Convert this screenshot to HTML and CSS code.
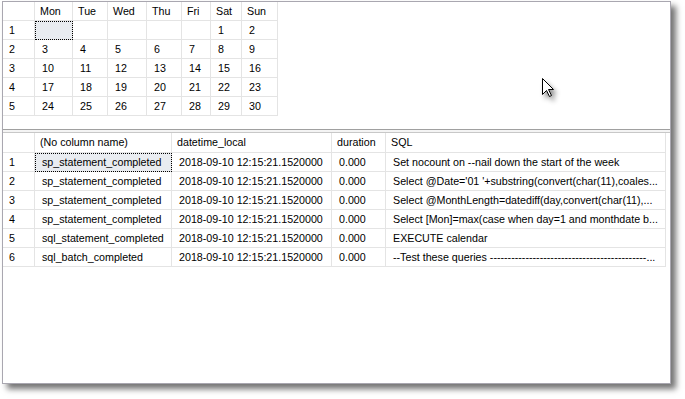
FILE: index.html
```
<!DOCTYPE html>
<html>
<head>
<meta charset="utf-8">
<link rel="stylesheet" href="styles.css">
</head>
<body>
<div class="window">
  <div class="pane pane-top">
    <div class="grid cal">
      <div class="row head"><div class="c rn"></div><div class="c">Mon</div><div class="c">Tue</div><div class="c">Wed</div><div class="c">Thu</div><div class="c">Fri</div><div class="c">Sat</div><div class="c">Sun</div></div>
      <div class="row"><div class="c rn">1</div><div class="c focus"></div><div class="c"></div><div class="c"></div><div class="c"></div><div class="c"></div><div class="c">1</div><div class="c">2</div></div>
      <div class="row"><div class="c rn">2</div><div class="c">3</div><div class="c">4</div><div class="c">5</div><div class="c">6</div><div class="c">7</div><div class="c">8</div><div class="c">9</div></div>
      <div class="row"><div class="c rn">3</div><div class="c">10</div><div class="c">11</div><div class="c">12</div><div class="c">13</div><div class="c">14</div><div class="c">15</div><div class="c">16</div></div>
      <div class="row"><div class="c rn">4</div><div class="c">17</div><div class="c">18</div><div class="c">19</div><div class="c">20</div><div class="c">21</div><div class="c">22</div><div class="c">23</div></div>
      <div class="row"><div class="c rn">5</div><div class="c">24</div><div class="c">25</div><div class="c">26</div><div class="c">27</div><div class="c">28</div><div class="c">29</div><div class="c">30</div></div>
    </div>
  </div>
  <div class="splitter"></div>
  <div class="pane pane-bottom">
    <div class="grid res">
      <div class="row head"><div class="c rn"></div><div class="c">(No column name)</div><div class="c">datetime_local</div><div class="c">duration</div><div class="c">SQL</div></div>
      <div class="row"><div class="c rn">1</div><div class="c focus">sp_statement_completed</div><div class="c">2018-09-10 12:15:21.1520000</div><div class="c">0.000</div><div class="c">Set nocount on --nail down the start of the week</div></div>
      <div class="row"><div class="c rn">2</div><div class="c">sp_statement_completed</div><div class="c">2018-09-10 12:15:21.1520000</div><div class="c">0.000</div><div class="c">Select @Date='01 '+substring(convert(char(11),coales...</div></div>
      <div class="row"><div class="c rn">3</div><div class="c">sp_statement_completed</div><div class="c">2018-09-10 12:15:21.1520000</div><div class="c">0.000</div><div class="c">Select @MonthLength=datediff(day,convert(char(11),...</div></div>
      <div class="row"><div class="c rn">4</div><div class="c">sp_statement_completed</div><div class="c">2018-09-10 12:15:21.1520000</div><div class="c">0.000</div><div class="c">Select [Mon]=max(case when day=1 and monthdate b...</div></div>
      <div class="row"><div class="c rn">5</div><div class="c">sql_statement_completed</div><div class="c">2018-09-10 12:15:21.1520000</div><div class="c">0.000</div><div class="c">EXECUTE calendar</div></div>
      <div class="row"><div class="c rn">6</div><div class="c">sql_batch_completed</div><div class="c">2018-09-10 12:15:21.1520000</div><div class="c">0.000</div><div class="c">--Test these queries --------------------------------------------...</div></div>
    </div>
  </div>
</div>
<svg class="cursor" width="14" height="21" viewBox="0 0 14 21" xmlns="http://www.w3.org/2000/svg">
  <path d="M0.5 0.5 V16.5 L4.5 12.5 L7.5 18.5 L9.5 17.5 L6.5 11.5 H11.5 Z" fill="#fff" stroke="#000" stroke-width="1" stroke-linejoin="miter"/>
</svg>
</body>
</html>
```
FILE: styles.css
```
html, body {
  margin: 0;
  padding: 0;
  background: #fff;
}
body {
  font-family: "Liberation Sans", Arial, sans-serif;
  font-size: 10.7px;
  color: #000;
  position: relative;
  width: 685px;
  height: 399px;
  overflow: hidden;
}
.window {
  box-sizing: border-box;
  margin: 1px 0 0 2px;
  width: 669px;
  height: 383px;
  border: 1px solid #a9a7b0;
  box-shadow: 5px 5px 6px rgba(0, 0, 0, 0.55);
  background: #fff;
  display: flex;
  flex-direction: column;
}
.pane {
  background: #fff;
}
.pane-top {
  box-sizing: border-box;
  height: 128px;
  flex: none;
  border-bottom: 1px solid #a0a0a0;
}
.splitter {
  height: 2px;
  flex: none;
  background: #f4f4f4;
}
.pane-bottom {
  flex: 1;
  border-top: 1px solid #c8c8c8;
}
.row {
  display: grid;
}
.cal .row {
  grid-template-columns: 32px 38px 35px 39px 35px 29px 31px 36px;
}
.res .row {
  grid-template-columns: 32px 137px 160px 54px 280px;
}
.c {
  box-sizing: border-box;
  height: 19px;
  line-height: 18px;
  padding-left: 7px;
  border-right: 1px solid #e4e4e4;
  border-bottom: 1px solid #e4e4e4;
  white-space: nowrap;
  overflow: hidden;
}
.head .c {
  padding-left: 5px;
}
.res .head .c {
  height: 20px;
  line-height: 19px;
}
.c.rn {
  padding-left: 6px;
}
.focus {
  background: #e9ecf0;
  outline: 1px dotted #000;
  outline-offset: -1px;
}
.cursor {
  position: absolute;
  left: 542px;
  top: 78px;
  filter: drop-shadow(3px 4px 2.5px rgba(0, 0, 0, 0.45));
}
```
